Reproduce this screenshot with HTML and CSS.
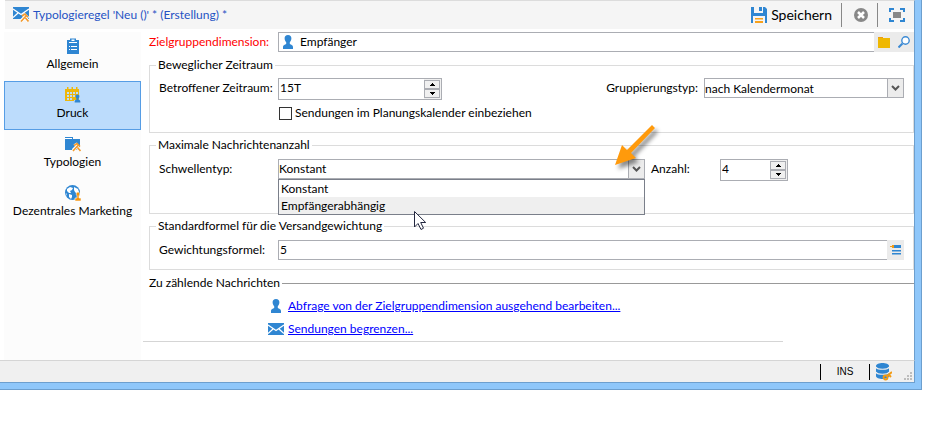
FILE: index.html
```html
<!DOCTYPE html>
<html lang="de">
<head>
<meta charset="utf-8">
<title>Typologieregel</title>
<link rel="stylesheet" href="styles.css">
</head>
<body>
<svg class="defs" aria-hidden="true">
  <symbol id="person" viewBox="0 0 16 16"><path fill="#2f86d2" d="M8 1c2.300 0 3.400 1.400 3.400 3.300 0 1.700-.8 3-1.600 3.900v1.600c0 .7 3.200 1 3.200 3.200v2H3v-2c0-2.200 3.200-2.500 3.200-3.200V8.200C5.400 7.300 4.600 6 4.600 4.300 4.600 2.400 5.700 1 8 1z"/></symbol>
  <symbol id="mail" viewBox="0 0 16 12"><path fill="#2f86d2" d="M0 0h16v12H0z"/><path fill="none" stroke="#fff" stroke-width="1.300" d="M0 2l8 5.500L16 2M0 10.500l5-4.500M16 10.500L11 6"/></symbol>
  <symbol id="chevron" viewBox="0 0 8 6"><path fill="none" stroke="#555" stroke-width="2" d="M0.500 1L4 4.500 7.500 1"/></symbol>
  <symbol id="up" viewBox="0 0 5 3"><path d="M2 0h1v1h1v1h1v1H0V2h1V1h1z"/></symbol>
  <symbol id="down" viewBox="0 0 5 3"><path d="M0 0h5v1H4v1H3v1H2V2H1V1H0z"/></symbol>
  <symbol id="tools" viewBox="0 0 9 9"><path fill="none" stroke="#fff" stroke-width="3.500" d="M1 8l5-5M3 1l5 7"/><path fill="none" stroke="#f29a2e" stroke-width="1.600" d="M1 8.500l5-5.500M2 3l3-2 3 3M5.500 5l3 3.500"/></symbol>
</svg>

<div class="window">
  <header class="toolbar">
    <svg class="icon" viewBox="0 0 16 16"><use href="#mail" x="0" y="0" width="16" height="12"/><use href="#tools" x="7" y="6" width="9" height="9"/></svg>
    <h1 class="title">Typologieregel 'Neu ()' * (Erstellung) *</h1>
    <button class="tool save" type="button">
      <svg class="icon" viewBox="0 0 16 16"><path fill="#2f86d2" d="M0 0h3v6h9V0h2l2 2v14h-2V9H2v7H0z"/><path fill="#2f86d2" d="M8 0h3v4H8z"/><path fill="#f7a11b" d="M4 11h8v1.500H4zM4 14h8v2H4z"/></svg>
      Speichern
    </button>
    <button class="tool cancel" type="button" aria-label="Abbrechen">
      <svg class="icon" viewBox="0 0 16 16"><circle cx="8" cy="8" r="7" fill="#888"/><path stroke="#fff" stroke-width="2.500" d="M5 5l6 6M11 5l-6 6"/></svg>
    </button>
    <button class="tool full" type="button" aria-label="Vollbild">
      <svg class="icon" viewBox="0 0 16 16"><path fill="none" stroke="#2f86d2" stroke-width="2" d="M1 5V2h4M11 2h4v3M15 11v3h-4M5 14H1v-3"/><path fill="#888" d="M4 5h8v6H4z"/></svg>
    </button>
  </header>

  <div class="body">
    <nav class="sidebar">
      <a class="nav-item" href="#allgemein">
        <svg class="icon" viewBox="0 0 16 16"><path fill="#2f86d2" d="M2 2h3V0.500h6V2h3v14H2z"/><path fill="#fff" d="M6.500 1.500h3V3h-3zM4 4h8v1H4zM4 8h1v1H4zM6 8h6v1H6zM4 11h1v1H4zM6 11h6v1H6z"/></svg>
        <span>Allgemein</span>
      </a>
      <a class="nav-item active" href="#druck" aria-current="page">
        <svg class="icon" viewBox="0 0 16 16"><path fill="#edb70b" d="M0 2h2V0h1.500v2h3V0H8v2h3V0h1.500v2H14v12H0z"/><path fill="#bcdcfc" d="M2 5h2v2H2zM5 5h2v2H5zM8 5h2v2H8zM11 5h2v2h-2zM2 8h2v2H2zM5 8h2v2H5zM8 8h2v2H8zM2 11h2v2H2zM5 11h2v2H5zM9 13h7v3H9z"/><use href="#person" x="8" y="7" width="9" height="9"/></svg>
        <span>Druck</span>
      </a>
      <a class="nav-item" href="#typologien">
        <svg class="icon" viewBox="0 0 16 16"><path fill="#2f86d2" d="M0 1h8v2h7v11H0z"/><path fill="#fff" d="M0 2h7v1H0z"/><use href="#tools" x="7" y="6" width="9" height="10"/></svg>
        <span>Typologien</span>
      </a>
      <a class="nav-item" href="#marketing">
        <svg class="icon" viewBox="0 0 16 16"><circle cx="7.500" cy="7.500" r="7.500" fill="#2f86d2"/><path fill="#fff" d="M2 4l3-2 3 1-1 2-2 1 1 2H4L2 6zM9 2l4 2 1 3-2 2-2-2-1-2zM4 9l3 1v2l-1 2-2-2zM1 8l1 1v2z"/><path fill="#f7930a" stroke="#fcfcfc" stroke-width=".6" d="M13 7c2 0 2.200 2.800 1 3.800V13h2v3h-6v-3h2v-2.200C10.800 9.800 11 7 13 7z"/></svg>
        <span>Dezentrales Marketing</span>
      </a>
    </nav>

    <main class="form">
      <div class="row target">
        <label class="label required" for="dimension">Zielgruppendimension:</label>
        <div class="field grow">
          <svg class="icon field-icon"><use href="#person"/></svg>
          <input id="dimension" type="text" value="Empfänger">
        </div>
        <div class="field-buttons">
          <button type="button" aria-label="Ordner öffnen"><svg viewBox="0 0 12 12"><path fill="#ee9a12" d="M0 1h5v1H0z"/><path fill="#efb802" d="M0 2h12v10H0z"/></svg></button>
          <button type="button" aria-label="Suchen"><svg viewBox="0 0 12 12"><circle cx="7.500" cy="4.500" r="3.700" fill="#fff" stroke="#3c8ad4" stroke-width="1.400"/><path stroke="#3c8ad4" stroke-width="2" d="M4.500 7.500L.5 11.500"/></svg></button>
        </div>
      </div>

      <fieldset class="group period">
        <legend>Beweglicher Zeitraum</legend>
        <div class="row">
          <label class="label" for="zeitraum">Betroffener Zeitraum:</label>
          <div class="field spin wide">
            <input id="zeitraum" type="text" value="15T">
            <div class="steps">
              <button type="button" aria-label="Mehr"><svg><use href="#up"/></svg></button>
              <button type="button" aria-label="Weniger"><svg><use href="#down"/></svg></button>
            </div>
          </div>
          <div class="grouping">
            <label for="gruppierung">Gruppierungstyp:</label>
            <div class="field combo small">
              <select id="gruppierung"><option>nach Kalendermonat</option></select>
              <svg class="arrow"><use href="#chevron"/></svg>
            </div>
          </div>
        </div>
        <label class="check"><input type="checkbox">Sendungen im Planungskalender einbeziehen</label>
      </fieldset>

      <fieldset class="group maximum">
        <legend>Maximale Nachrichtenanzahl</legend>
        <div class="row">
          <label class="label" for="schwelle">Schwellentyp:</label>
          <div class="field combo large">
            <select id="schwelle"><option>Konstant</option><option>Empfängerabhängig</option></select>
            <svg class="arrow"><use href="#chevron"/></svg>
            <ul class="menu" role="listbox" aria-label="Schwellentyp">
              <li role="option" aria-selected="true">Konstant</li>
              <li class="hover" role="option" aria-selected="false">Empfängerabhängig</li>
            </ul>
            <svg class="pointer" viewBox="0 0 14 22"><path fill="#fff" stroke="#23273f" d="M1.500 1.500v15.500l3.500-3.500 3 6 2.500-1.300-2.800-5.700h5z"/></svg>
            <svg class="callout" viewBox="0 0 60 60"><path fill="#ff9a0c" d="M42 3l3 3-24 25 5 5-21 7 7-20 5 5z"/></svg>
          </div>
          <label class="count-label" for="anzahl">Anzahl:</label>
          <div class="field spin">
            <input id="anzahl" type="text" value="4">
            <div class="steps">
              <button type="button" aria-label="Mehr"><svg><use href="#up"/></svg></button>
              <button type="button" aria-label="Weniger"><svg><use href="#down"/></svg></button>
            </div>
          </div>
        </div>
      </fieldset>

      <fieldset class="group weight">
        <legend>Standardformel für die Versandgewichtung</legend>
        <div class="row">
          <label class="label" for="formel">Gewichtungsformel:</label>
          <div class="field grow"><input id="formel" type="text" value="5"></div>
          <div class="field-buttons">
            <button class="expr" type="button" aria-label="Ausdruck bearbeiten"><svg viewBox="0 0 12 12"><path fill="#2f86d2" d="M4 1h7v3H4zM2 6h9v1.500H2zM2 9h9v1.500H2z"/><path fill="#f29a12" d="M0 2h2V1h2v3H2V3H0z"/></svg></button>
          </div>
        </div>
      </fieldset>

      <section class="messages">
        <h2 class="section-title">Zu zählende Nachrichten</h2>
        <a class="action" href="#abfrage"><svg class="icon"><use href="#person"/></svg><span>Abfrage von der Zielgruppendimension ausgehend bearbeiten...</span></a>
        <a class="action" href="#begrenzen"><svg class="icon"><use href="#mail"/></svg><span>Sendungen begrenzen...</span></a>
      </section>
    </main>
  </div>

  <footer class="status">
    <span class="mode">INS</span>
    <svg class="db" viewBox="0 0 16 18"><path fill="#2f86d2" d="M0 3c0-4 13-4 13 0v10c0 4-13 4-13 0z"/><path fill="none" stroke="#efefef" stroke-width="1.200" d="M0 4c1 3 12 3 13 0M0 9c1 3 12 3 13 0"/><circle cx="9.500" cy="14.500" r="2" fill="none" stroke="#f29a12" stroke-width="1.800"/><path stroke="#f29a12" stroke-width="2" d="M11 13l5-4M13 12l2 2"/></svg>
    <svg class="grip" viewBox="0 0 8 8"><path fill="#bdbdbd" d="M6 0h2v2H6zM3 3h2v2H3zM6 3h2v2H6zM0 6h2v2H0zM3 6h2v2H3zM6 6h2v2H6z"/></svg>
  </footer>
</div>
</body>
</html>
```
FILE: styles.css
```css
* { box-sizing: border-box; }

body {
  margin: 0;
  background: #fff;
  color: #000;
  font: 12px/16px Lato, "Open Sans", sans-serif;
}

button, input, select { font: inherit; color: inherit; }
button { padding: 0; border: 0; background: none; }
svg { display: block; flex: none; }
.defs { position: absolute; width: 0; height: 0; }
.icon { width: 16px; height: 16px; }

.window {
  margin-right: 26px;
  border: solid #6d9fce;
  border-width: 0 1px 1px 0;
  background: #fff;
  box-shadow: inset -6px -6px #8fc7fa;
  padding: 0 6px 6px 0;
}

/* Toolbar */
.toolbar {
  display: flex;
  align-items: center;
  height: 29px;
  margin-left: 5px;
  padding: 0 9px 0 8px;
  border-top: 1px solid #dcdcdc;
  border-right: 1px solid #6d9fce;
  background: #f5f5f5;
}
.title {
  flex: 1;
  margin: 0 0 0 4px;
  color: #2553c4;
  font-size: 12px;
  font-weight: 400;
}
.tool { display: flex; align-items: center; height: 24px; }
.save { gap: 4px; padding-right: 9px; font-size: 14px; }
.cancel, .full { border-left: 1px solid #888; }
.cancel { padding: 0 8px 0 11px; }
.full { padding-left: 11px; }

/* Body */
.body {
  display: flex;
  padding: 3px 0 0 4px;
  border-right: 1px solid #6d9fce;
}
.sidebar { flex: 0 0 137px; background: #fcfcfc; }
.nav-item {
  display: flex;
  flex-direction: column;
  align-items: center;
  gap: 2px;
  height: 49px;
  padding-top: 5px;
  border: 1px solid transparent;
  color: inherit;
  text-decoration: none;
}
.nav-item.active { border-color: #569de5; background: #bcdcfc; }

.form { flex: 1; min-width: 0; padding-left: 8px; }
.row { display: flex; align-items: flex-start; }
.label { flex: 0 0 119px; min-width: 0; line-height: 20px; white-space: nowrap; }
.label.required { flex-basis: 129px; color: #f00; }
.target { margin-bottom: 5px; }

.field {
  display: flex;
  position: relative;
  min-width: 0;
  height: 20px;
  border: 1px solid #abadb3;
  background: #fff;
}
.field input {
  flex: 1;
  width: 0;
  min-width: 0;
  padding: 0 1px;
  border: 0;
  outline: 0;
  background: none;
}
.grow { flex: 1; border-right: 0; }
.field-icon { margin: 1px 3px 0 1px; }

.field-buttons { display: flex; height: 20px; background: #ebebeb; }
.field-buttons button { display: flex; align-items: center; width: 20px; padding-left: 4px; }
.field-buttons svg { width: 12px; height: 12px; }
.field-buttons .expr { width: 17px; padding-left: 3px; }

.spin { flex: 0 0 68px; height: 22px; }
.spin input { padding-bottom: 2px; }
.spin.wide { flex-basis: 164px; }
.steps {
  display: flex;
  flex-direction: column;
  width: 17px;
  padding: 1px 1px 1px 0;
  background: #f0f0f0;
}
.steps button {
  display: flex;
  flex: 1;
  align-items: center;
  justify-content: center;
  border: 1px solid #abadb3;
}
.steps svg { width: 5px; height: 3px; }

.combo select {
  flex: 1;
  min-width: 0;
  padding: 0 18px 0 0;
  border: 0;
  outline: 0;
  background: none;
  appearance: none;
}
.combo .arrow {
  position: absolute;
  top: 0;
  right: 0;
  width: 16px;
  height: 18px;
  padding: 6px 3px;
  border-left: 1px solid #abadb3;
  background: #ececec;
  pointer-events: none;
}
.combo.large { flex: 0 1 367px; }
.combo.small { width: 200px; }

.group {
  min-width: 0;
  margin: 0 0 4px;
  padding: 6px 9px 9px;
  border: 1px solid #dcdcdc;
}
.group legend { margin-left: -3px; padding: 0 2px; }
.period { padding: 5px 9px 11px; }
.maximum { padding-bottom: 32px; }

.grouping { display: flex; gap: 6px; margin-left: auto; line-height: 20px; }
.check { display: flex; align-items: center; width: max-content; margin: 5px 0 0 120px; }
.check input {
  width: 13px;
  height: 13px;
  margin: 0 3px 0 0;
  border: 1px solid #333;
  background: #fff;
  appearance: none;
}
.count-label { flex: 0 0 75px; padding-left: 6px; line-height: 20px; }

/* Open list of the threshold type */
.menu {
  position: absolute;
  z-index: 1;
  top: 19px;
  left: -1px;
  right: -1px;
  margin: 0;
  padding: 0;
  border: 1px solid #7a7f8a;
  background: #fff;
  list-style: none;
}
.menu li { padding: 0 2px; line-height: 17px; }
.menu .hover { background: #efefef; }
.pointer { position: absolute; z-index: 2; top: 50px; left: 134px; width: 14px; height: 22px; }
.callout {
  position: absolute;
  z-index: 2;
  top: -38px;
  right: -26px;
  width: 60px;
  height: 60px;
  filter: drop-shadow(3px 4px 2px rgba(0, 0, 0, .45));
  pointer-events: none;
}

/* Messages to count */
.messages {
  margin: 5px 0 18px -6px;
  padding: 0 0 5px 6px;
  background: linear-gradient(#d5d5d5, #d5d5d5) left bottom / calc(100% - 131px) 1px no-repeat;
}
.section-title {
  display: flex;
  align-items: center;
  gap: 2px;
  margin: 0;
  font-size: 12px;
  font-weight: 400;
}
.section-title::after { content: ""; flex: 1; height: 1px; background: #999; }
.action {
  display: flex;
  gap: 4px;
  width: max-content;
  margin: 7px 0 0 119px;
  color: #00f;
}

/* Status bar */
.status {
  display: flex;
  align-items: center;
  justify-content: flex-end;
  height: 23px;
  padding-right: 2px;
  border: solid #d5d5d5;
  border-width: 1px 1px 1px 0;
  border-right-color: #6d9fce;
  border-bottom-color: #6d9fce;
  background: #f0f0f0;
}
.mode {
  width: 50px;
  border: solid #000;
  border-width: 0 1px;
  font: 10px/16px "Liberation Sans", sans-serif;
  text-align: center;
}
.db { width: 16px; height: 18px; margin: 0 12px 0 6px; }
.grip { align-self: flex-end; width: 8px; height: 8px; margin-bottom: 2px; }
```
